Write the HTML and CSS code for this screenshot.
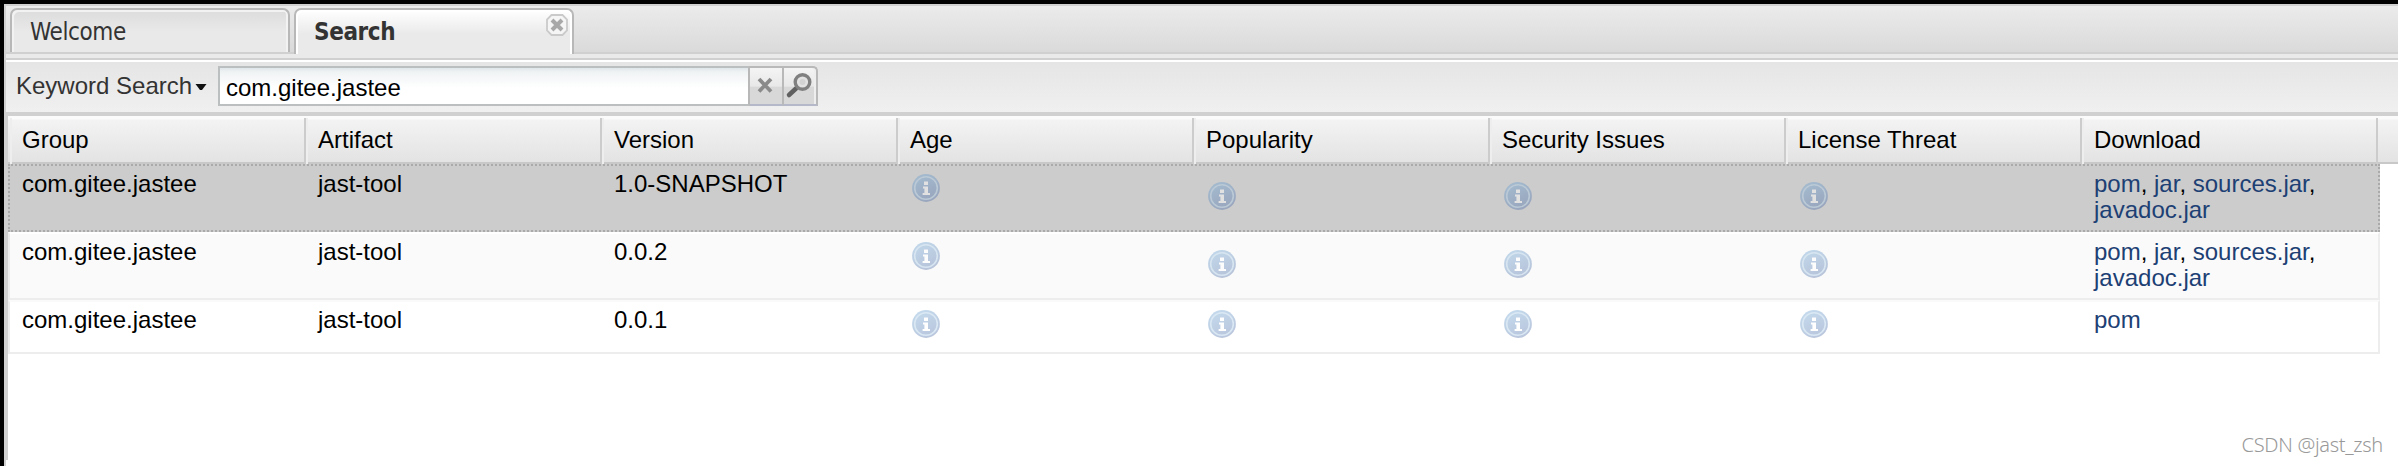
FILE: index.html
```html
<!DOCTYPE html>
<html lang="en">
<head>
<meta charset="utf-8">
<title>Search</title>
<link rel="stylesheet" href="styles.css">
</head>
<body>
<svg class="defs" width="0" height="0">
  <defs>
    <linearGradient id="disc" x1="0" y1="0" x2="0.5" y2="1">
      <stop offset="0" stop-color="#70aad8"/><stop offset="1" stop-color="#5474ac"/>
    </linearGradient>
    <symbol id="info" viewBox="0 0 28 28">
      <circle cx="14" cy="14" r="13.9" fill="url(#disc)"/>
      <circle cx="14" cy="14" r="11.3" fill="none" stroke="#a4c6e4" stroke-width="1.600"/>
      <path d="M12 7.500h4v3.400h-4zM11 12.400h5v6.600h2v2.100h-7.400v-2.100h1.800v-4.500h-1.400z" fill="#fff"/>
    </symbol>
  </defs>
</svg>
<main class="window">
  <nav class="tabs">
    <div class="tab">Welcome</div>
    <div class="tab active">Search
      <svg class="close" viewBox="0 0 22 22">
        <path d="M5.500 1h11l4.500 4.500v11l-4.500 4.500h-11l-4.500-4.500v-11z" fill="#f5f5f5" stroke="#cacaca" stroke-width="1.800"/>
        <path d="M6 6l10 10m0-10l-10 10" stroke="#a8a8a8" stroke-width="4"/>
      </svg>
    </div>
  </nav>
  <div class="strip"></div>
  <div class="toolbar">
    <span class="label">Keyword Search</span>
    <svg class="arrow" viewBox="0 0 12 8"><path d="M0.500 1h11l-4.500 6h-2z" fill="#111"/></svg>
    <div class="field">com.gitee.jastee</div>
    <div class="trigger clear">
      <svg viewBox="0 0 32 36"><path d="M9 11l12 12.500m0-12.500l-12 12.500" stroke="#8a8a8a" stroke-width="3.800"/></svg>
    </div>
    <div class="trigger find">
      <svg viewBox="0 0 32 36"><path d="M12 20.500L5 27" stroke="#606060" stroke-width="4.500" stroke-linecap="round"/><circle cx="18.500" cy="14" r="7.300" fill="#e2e2e2" stroke="#808080" stroke-width="3.400"/><circle cx="18.500" cy="14" r="3" fill="#d3d3d3"/></svg>
    </div>
  </div>
  <section class="grid">
    <div class="head">
      <div>Group</div><div>Artifact</div><div>Version</div><div>Age</div><div>Popularity</div><div>Security Issues</div><div>License Threat</div><div>Download</div>
    </div>
    <div class="row selected">
      <div>com.gitee.jastee</div><div>jast-tool</div><div>1.0-SNAPSHOT</div>
      <div class="ico up"><svg><use href="#info"/></svg></div><div class="ico"><svg><use href="#info"/></svg></div><div class="ico"><svg><use href="#info"/></svg></div><div class="ico"><svg><use href="#info"/></svg></div>
      <div><a>pom</a>, <a>jar</a>, <a>sources.jar</a>, <a>javadoc.jar</a></div>
    </div>
    <div class="row alt">
      <div>com.gitee.jastee</div><div>jast-tool</div><div>0.0.2</div>
      <div class="ico up"><svg><use href="#info"/></svg></div><div class="ico"><svg><use href="#info"/></svg></div><div class="ico"><svg><use href="#info"/></svg></div><div class="ico"><svg><use href="#info"/></svg></div>
      <div><a>pom</a>, <a>jar</a>, <a>sources.jar</a>, <a>javadoc.jar</a></div>
    </div>
    <div class="row last">
      <div>com.gitee.jastee</div><div>jast-tool</div><div>0.0.1</div>
      <div class="ico up"><svg><use href="#info"/></svg></div><div class="ico up"><svg><use href="#info"/></svg></div><div class="ico up"><svg><use href="#info"/></svg></div><div class="ico up"><svg><use href="#info"/></svg></div>
      <div><a>pom</a></div>
    </div>
  </section>
</main>
<div class="watermark">CSDN @jast_zsh</div>
</body>
</html>
```

FILE: styles.css
```css
* { box-sizing: border-box; }
body {
  margin: 0;
  height: 466px;
  overflow: hidden;
  background: #000;
  padding: 4px 0 0 4px;
  font: 24px/26px "Liberation Sans", Arial, sans-serif;
  color: #000;
}
.defs { position: absolute; }
.window {
  height: 462px;
  background: #fff;
  border-left: 2px solid #d0d0d0;
  border-top: 2px solid #d0d0d0;
}
.tabs {
  display: flex;
  gap: 4px;
  height: 48px;
  padding: 2px 0 0 4px;
  background: linear-gradient(#ebebeb, #dadada 46px, #d0d0d0 46px);
}
.tab {
  position: relative;
  width: 280px;
  height: 44px;
  border: 2px solid #b8b8b8;
  border-bottom: 0;
  border-radius: 7px 7px 0 0;
  background: linear-gradient(#dcdcdc, #e9e9e9 22px);
  box-shadow: inset 2px 2px 0 #f2f2f2, inset -2px 0 0 #f2f2f2;
  padding: 9px 0 0 18px;
  font: 24px/26px "DejaVu Sans Condensed", "DejaVu Sans", sans-serif;
  font-stretch: condensed;
  letter-spacing: -0.4px;
  color: #333;
}
.tab.active {
  height: 46px;
  font-weight: bold;
  letter-spacing: -0.4px;
  background: linear-gradient(#fff, #eaeaea 24px);
  box-shadow: inset 2px 2px 0 #fff, inset -2px 0 0 #fff;
}
.close { position: absolute; top: 4px; right: 4px; width: 22px; height: 22px; }
.strip { height: 6px; background: #eaeaea; border-bottom: 2px solid #d0d0d0; }
.toolbar {
  display: flex;
  align-items: flex-start;
  height: 56px;
  padding: 6px 0 0 10px;
  border-bottom: 4px solid #d0d0d0;
  background: linear-gradient(#fff 2px, #e5e5e5 2px, #f0f0f0);
}
.label { width: 179px; padding-top: 7px; color: #333; white-space: nowrap; }
.arrow { width: 12px; height: 8px; margin: 17px 11px 0 0; }
.field {
  width: 532px;
  height: 40px;
  border: 2px solid #bcbfbf;
  border-right-color: #b8b8b8;
  background: linear-gradient(#dfe6e9, #f0f3f4 4px, #fff 20px);
  padding: 7px 0 0 6px;
}
.trigger {
  height: 40px;
  width: 34px;
  border: solid #b9b9b9;
  border-width: 2px 2px 2px 0;
  border-bottom-color: #b5b8c8;
  background: linear-gradient(#f4f4f4, #e8e8e8 50%, #d8d8d8 54%, #d8d8d8);
}
.trigger svg { display: block; width: 32px; height: 36px; }
.find { border-top-right-radius: 5px; box-shadow: inset -2px 0 0 #eee; }
.grid { border-left: 2px solid #d0d0d0; height: 344px; }
.head {
  display: flex;
  height: 48px;
  padding: 2px 0 0 2px;
  background: linear-gradient(#fbfbfb 3px, #f3f3f3 4px, #e3e3e3 46px, #c8c8c8 46px);
}
.head div {
  width: 296px;
  height: 46px;
  border-right: 2px solid #ccc;
  box-shadow: inset 2px 0 0 #eee;
  padding: 9px 0 0 12px;
}
.row {
  display: flex;
  width: 2372px;
  height: 68px;
  border: 2px solid #ededed;
  border-top-color: #fafafa;
}
.row > div { width: 296px; padding: 5px 10px 0 12px; }
.row svg { display: block; width: 28px; height: 28px; opacity: .4; margin: 14px 0 0 2px; }
.row .ico.up svg { margin-top: 6px; }
.row .ico { padding-top: 2px; }
.selected { background: #ccc; border: 2px dotted #aaa; }
.selected svg { opacity: .42; }
.alt { background: #fafafa; border-top-color: #fff; }
.last { height: 54px; }
.row a { color: #1d4074; }
.watermark {
  position: absolute;
  right: 15px;
  bottom: 7px;
  font: 20px/28px "Noto Sans", "Open Sans", sans-serif;
  font-weight: 300;
  letter-spacing: -0.3px;
  color: #999;
}
```
